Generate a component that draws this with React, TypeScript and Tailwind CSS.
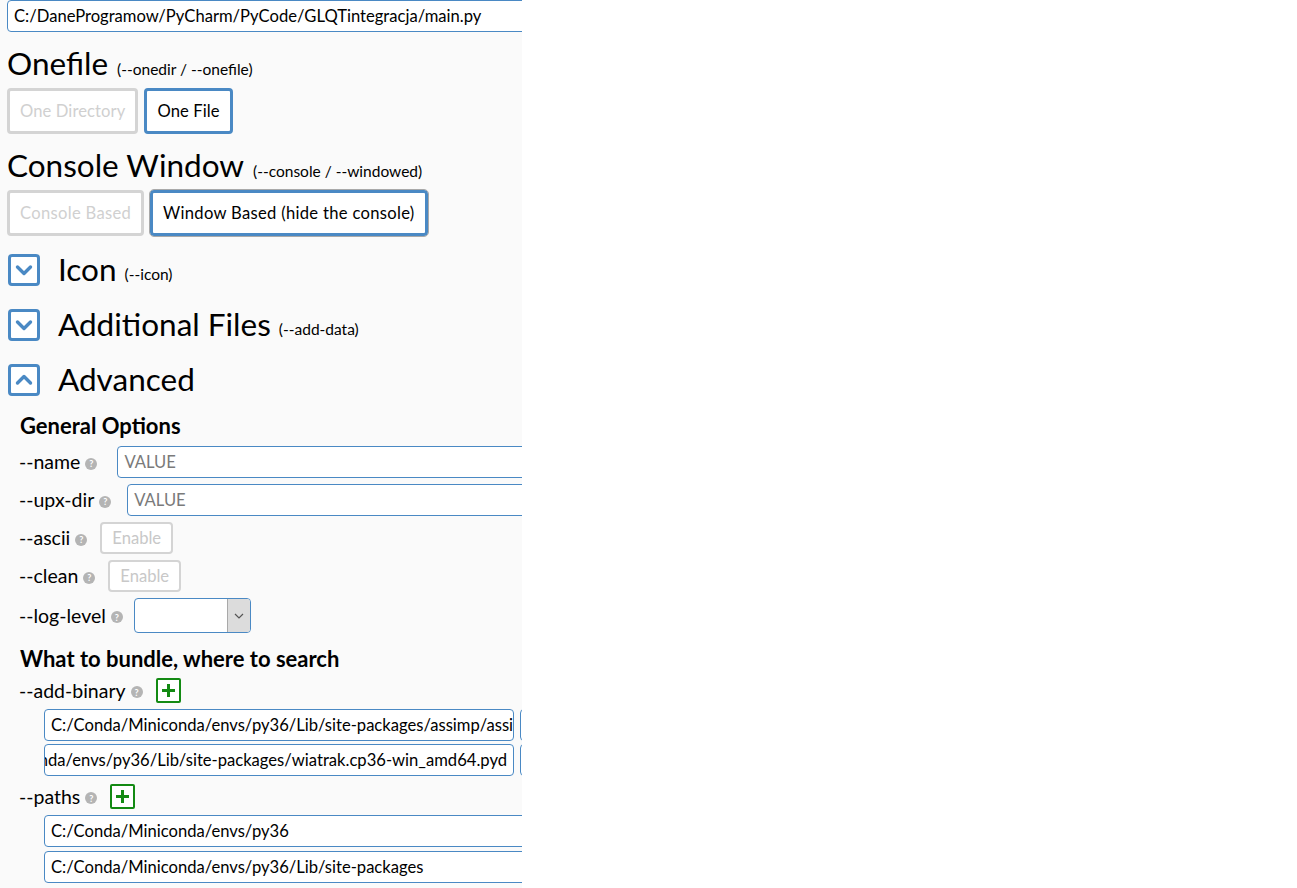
import React from 'react';

const BLUE = 'border-[#4a89c4]';

function Help() {
  return (
    <span className="inline-flex items-center justify-center w-[12px] h-[12px] rounded-full bg-[#b4b4b4] text-white text-[9px] font-bold leading-none ml-[5px] mt-[3px]">
      ?
    </span>
  );
}

function Chevron({ up }: { up?: boolean }) {
  return (
    <span className={`flex items-center justify-center w-[32px] h-[32px] rounded-[4px] border-[3px] ${BLUE} bg-white`}>
      <svg width="18" height="18" viewBox="0 0 18 18" fill="none">
        <path
          d={up ? 'M2.5 12 L9 5.5 L15.5 12' : 'M2.5 6 L9 12.5 L15.5 6'}
          stroke="#4a89c4"
          strokeWidth="3.4"
          strokeLinecap="round"
          strokeLinejoin="round"
        />
      </svg>
    </span>
  );
}

function Plus() {
  return (
    <span className="flex items-center justify-center w-[25px] h-[25px] rounded-[2px] border-2 border-[#138a13] bg-white">
      <svg width="15" height="15" viewBox="0 0 15 15">
        <path d="M7.5 1 V14 M1 7.5 H14" stroke="#138a13" strokeWidth="3" />
      </svg>
    </span>
  );
}

function Section({ title, hint, up }: { title: string; hint?: string; up?: boolean }) {
  return (
    <div className="flex items-center h-[32px] pl-[1px]">
      <Chevron up={up} />
      <span className="ml-[18px] text-[31.5px] leading-none">{title}</span>
      {hint && <span className="ml-[8px] mt-[9px] text-[15.5px]">{hint}</span>}
    </div>
  );
}

function Choice({ label, active, outline, wide }: { label: string; active?: boolean; outline?: boolean; wide?: boolean }) {
  return (
    <span
      className={`flex items-center h-[46px] px-[10px] rounded-[4px] border-[3px] bg-white text-[16.6px] ${
        wide ? 'tracking-[0.3px]' : 'tracking-[0.1px]'
      } ${active ? `${BLUE} text-black` : 'border-[#d4d4d4] text-[#d0d0d0]'} ${
        outline ? 'outline outline-1 outline-[#a9a9a9]' : ''
      }`}
    >
      {label}
    </span>
  );
}

function TextBox({ value, placeholder, className = '' }: { value?: string; placeholder?: string; className?: string }) {
  return (
    <div
      className={`flex items-center h-[32px] px-[6px] rounded-[4px] border ${BLUE} bg-white text-[16.6px] whitespace-nowrap overflow-hidden ${className}`}
    >
      {value ? <span>{value}</span> : <span className="text-[#7a7a7a]">{placeholder}</span>}
    </div>
  );
}

function Option({ name, gap = 'ml-[13px]', children }: { name: string; gap?: string; children: React.ReactNode }) {
  return (
    <div className="flex items-center pl-[13px]">
      <span className="text-[19.5px] leading-none">{name}</span>
      <Help />
      <span className={gap}>{children}</span>
    </div>
  );
}

function EnableBtn() {
  return (
    <span className="flex items-center h-[32px] px-[10px] rounded-[4px] border-2 border-[#d4d4d4] bg-white text-[16.6px] text-[#c8c8c8]">
      Enable
    </span>
  );
}

export default function App() {
  return (
    <div className="min-h-[888px] bg-white" style={{ fontFamily: 'Lato, "Noto Sans", sans-serif' }}>
      <div className="w-[522px] h-[888px] overflow-hidden bg-[#fafafa] text-black">
        <div className="w-[900px] pl-[7px]">
          <TextBox value="C:/DaneProgramow/PyCharm/PyCode/GLQTintegracja/main.py" className="w-[890px]" />

          <div className="flex items-baseline h-[56px] pt-[12px]">
            <span className="text-[31.5px] leading-[38px]">Onefile</span>
            <span className="ml-[9px] text-[15.5px]">(--onedir / --onefile)</span>
          </div>
          <div className="flex gap-[6px]">
            <Choice label="One Directory" />
            <Choice label="One File" active />
          </div>

          <div className="flex items-baseline h-[56px] pt-[12px]">
            <span className="text-[31.5px] leading-[38px]">Console Window</span>
            <span className="ml-[9px] text-[15.5px]">(--console / --windowed)</span>
          </div>
          <div className="flex gap-[6px]">
            <Choice label="Console Based" wide />
            <Choice label="Window Based (hide the console)" active outline wide />
          </div>

          <div className="flex flex-col gap-[23px] mt-[18px]">
            <Section title="Icon" hint="(--icon)" />
            <Section title="Additional Files" hint="(--add-data)" />
            <Section title="Advanced" up />
          </div>

          <div className="pl-[13px] mt-[18px] text-[22px] font-bold leading-[24px]">General Options</div>

          <div className="flex flex-col gap-[6px] mt-[8px] -ml-[1px]">
            <Option name="--name" gap="ml-[20px]">
              <TextBox placeholder="VALUE" className="w-[700px]" />
            </Option>
            <Option name="--upx-dir" gap="ml-[16px]">
              <TextBox placeholder="VALUE" className="w-[700px]" />
            </Option>
            <Option name="--ascii">
              <EnableBtn />
            </Option>
            <Option name="--clean">
              <EnableBtn />
            </Option>
            <Option name="--log-level" gap="ml-[11px]">
              <span className={`flex h-[35px] w-[117px] rounded-[4px] border ${BLUE} bg-white overflow-hidden`}>
                <span className="flex-1" />
                <span className="flex items-center justify-center w-[23px] bg-[#dcdcdc] border-l border-[#a9a9a9]">
                  <svg width="10" height="6" viewBox="0 0 10 6">
                    <path d="M1 1 L5 5 L9 1" stroke="#555" strokeWidth="1.2" fill="none" />
                  </svg>
                </span>
              </span>
            </Option>
          </div>

          <div className="pl-[13px] mt-[14px] text-[22px] font-bold leading-[24px]">What to bundle, where to search</div>

          <div className="flex flex-col mt-[7px] -ml-[1px]">
            <Option name="--add-binary">
              <Plus />
            </Option>
            <div className="flex flex-col gap-[3px] pl-[38px] mt-[6px]">
              <div className="flex gap-[6px]">
                <TextBox value="C:/Conda/Miniconda/envs/py36/Lib/site-packages/assimp/assimp.dll" className="w-[470px]" />
                <TextBox value="." className="w-[300px]" />
              </div>
              <div className="flex gap-[6px]">
                <div className={`flex items-center justify-end h-[32px] w-[470px] px-[6px] rounded-[4px] border ${BLUE} bg-white text-[16.6px] whitespace-nowrap overflow-hidden`}>
                  <span>C:/Conda/Miniconda/envs/py36/Lib/site-packages/wiatrak.cp36-win_amd64.pyd</span>
                </div>
                <TextBox value="." className="w-[300px]" />
              </div>
            </div>
            <div className="mt-[8px]">
              <Option name="--paths">
                <Plus />
              </Option>
            </div>
            <div className="flex flex-col gap-[4px] pl-[38px] mt-[6px]">
              <TextBox value="C:/Conda/Miniconda/envs/py36" className="w-[700px]" />
              <TextBox value="C:/Conda/Miniconda/envs/py36/Lib/site-packages" className="w-[700px]" />
            </div>
          </div>
        </div>
      </div>
    </div>
  );
}
